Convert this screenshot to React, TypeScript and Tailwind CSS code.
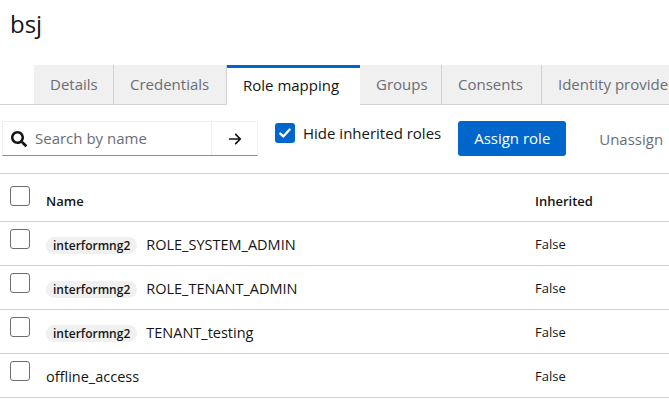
import React from "react";

const tabs = [
  { t: "Details", w: "w-[80px]" },
  { t: "Credentials", w: "w-[113px]" },
  { t: "Role mapping", w: "w-[133px]" },
  { t: "Groups", w: "w-[82px]" },
  { t: "Consents", w: "w-[100px]" },
  { t: "Identity providers", w: "w-[150px]" },
];

const rows = [
  { client: "interformng2", name: "ROLE_SYSTEM_ADMIN", inherited: "False" },
  { client: "interformng2", name: "ROLE_TENANT_ADMIN", inherited: "False" },
  { client: "interformng2", name: "TENANT_testing", inherited: "False" },
  { client: "", name: "offline_access", inherited: "False" },
];

function Box() {
  return <div className="w-[20px] h-[20px] border border-[#6a6e73] rounded-[3px] bg-white shrink-0" />;
}

export default function App() {
  return (
    <div className="w-[669px] h-[401px] overflow-hidden bg-white text-[#151515]" style={{ fontFamily: '"Open Sans", "Noto Sans", sans-serif' }}>
      <div className="h-[65px] pl-[10px] pt-[6px]">
        <h1 className="text-[24px] leading-[36px] font-normal">bsj</h1>
      </div>
      <div className="flex h-[40px] border-b border-[#d2d2d2] whitespace-nowrap">
        <div className="w-[34px] shrink-0" />
        {tabs.map(({ t, w }) => {
          const active = t === "Role mapping";
          return active ? (
            <div key={t} className={`${w} shrink-0 h-[40px] -mb-px bg-white border-t-[3px] border-[#0066cc] px-[16px] flex items-center text-[15px] text-[#151515] pb-[2px]`}>
              {t}
            </div>
          ) : (
            <div key={t} className={`${w} shrink-0 h-[39px] bg-[#f0f0f0] border-r border-[#d2d2d2] px-[16px] flex items-center text-[15px] text-[#6a6e73]`}>
              {t}
            </div>
          );
        })}
      </div>
      <div className="flex items-start h-[68px] pt-[16px] whitespace-nowrap">
        <div className="ml-[2px] flex w-[256px] h-[35px] border border-[#f0f0f0] border-b-[#8a8d90] shrink-0">
          <div className="flex items-center flex-1 pl-[8px]">
            <svg width="16" height="16" viewBox="0 0 512 512" className="mr-[8px]">
              <path fill="#151515" d="M505 442.7L405.3 343c-4.5-4.5-10.6-7-17-7H372c27.6-35.3 44-79.7 44-128C416 93.1 322.9 0 208 0S0 93.1 0 208s93.1 208 208 208c48.3 0 92.7-16.4 128-44v16.3c0 6.4 2.5 12.5 7 17l99.7 99.7c9.4 9.4 24.6 9.4 33.9 0l28.3-28.3c9.4-9.4 9.4-24.6.1-34zM208 336c-70.7 0-128-57.2-128-128 0-70.7 57.2-128 128-128 70.7 0 128 57.2 128 128 0 70.7-57.2 128-128 128z" />
            </svg>
            <span className="text-[15px] text-[#6a6e73]">Search by name</span>
          </div>
          <div className="w-[46px] border-l border-[#f0f0f0] flex items-center justify-center">
            <svg width="16" height="16" viewBox="0 0 24 24" fill="none" stroke="#151515" strokeWidth="2.6" strokeLinecap="round" strokeLinejoin="round">
              <path d="M4 12h15M13 5l7 7-7 7" />
            </svg>
          </div>
        </div>
        <div className="flex items-center ml-[17px] mt-[2px]">
          <div className="w-[20px] h-[20px] rounded-[3px] bg-[#0066cc] flex items-center justify-center">
            <svg width="14" height="14" viewBox="0 0 24 24" fill="none" stroke="white" strokeWidth="4" strokeLinecap="round" strokeLinejoin="round">
              <path d="M4 13l5 5L20 6" />
            </svg>
          </div>
          <span className="ml-[8px] text-[15px] leading-[20px]">Hide inherited roles</span>
        </div>
        <button className="ml-[17px] w-[108px] h-[35px] rounded-[3px] bg-[#0066cc] text-white text-[15px]">Assign role</button>
        <span className="ml-[33px] mt-[7px] text-[15px] text-[#6a6e73]">Unassign</span>
      </div>
      <div className="border-t border-[#d2d2d2]">
        <div className="flex items-center h-[48px] border-b border-[#d2d2d2] pt-[9px]">
          <div className="w-[46px] pl-[10px] -mt-[12px]"><Box /></div>
          <div className="w-[489px] text-[13px] font-semibold">Name</div>
          <div className="text-[13px] font-semibold">Inherited</div>
        </div>
        {rows.map((r) => (
          <div key={r.name} className="flex items-center h-[44px] border-b border-[#d2d2d2] whitespace-nowrap pt-[3px]">
            <div className="w-[46px] pl-[10px] -mt-[12px]"><Box /></div>
            <div className="w-[489px] flex items-center">
              {r.client && (
                <span className="h-[17px] px-[7px] rounded-full bg-[#f0f0f0] text-[12px] font-semibold leading-[17px] mr-[9px]">{r.client}</span>
              )}
              <span className="text-[14.5px]">{r.name}</span>
            </div>
            <div className="text-[13px]">{r.inherited}</div>
          </div>
        ))}
      </div>
    </div>
  );
}
